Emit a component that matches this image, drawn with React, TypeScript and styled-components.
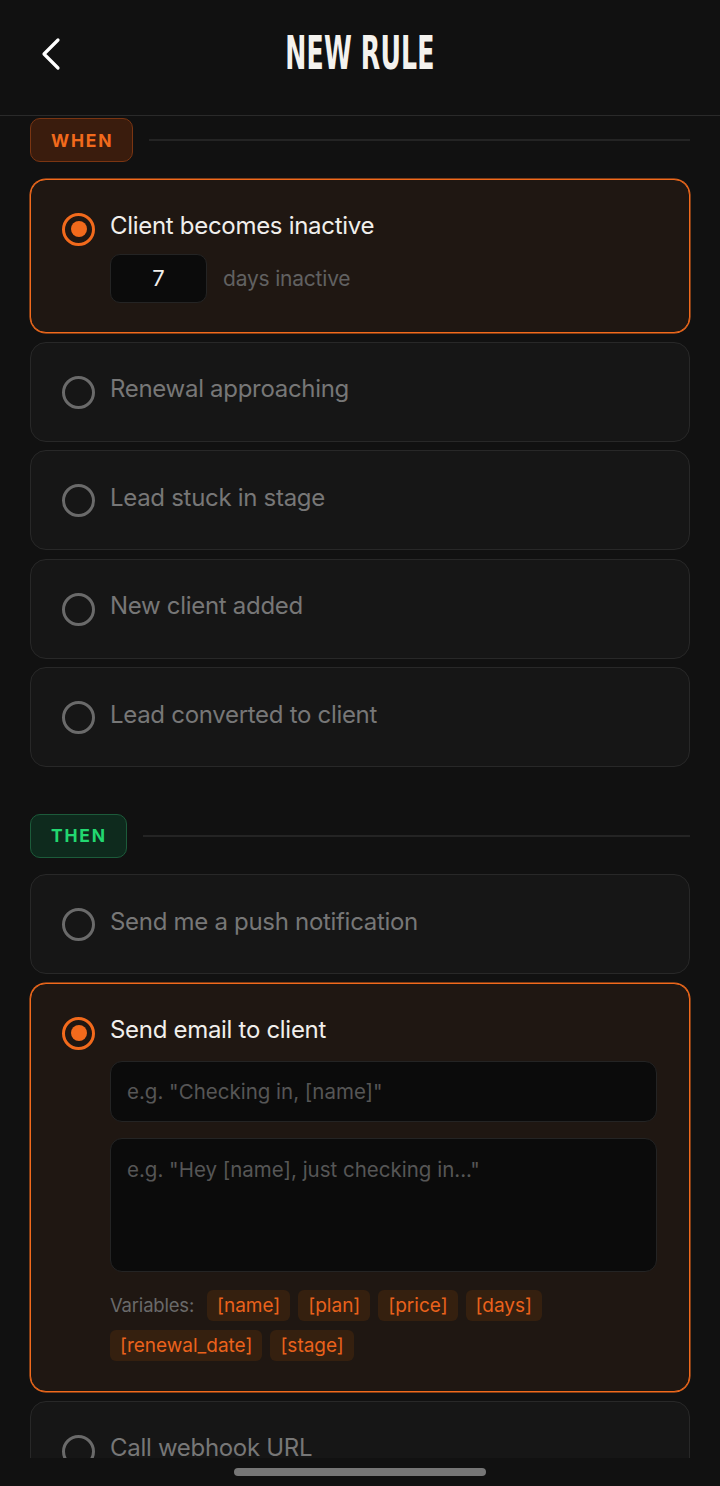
import React from "react";
import styled, { createGlobalStyle } from "styled-components";

const GlobalStyle = createGlobalStyle`
  html, body {
    margin: 0;
    padding: 0;
    background: #111111;
  }
  * {
    box-sizing: border-box;
  }
`;

const Screen = styled.div`
  width: 720px;
  height: 1486px;
  display: flex;
  flex-direction: column;
  background: #111111;
  font-family: Inter, "Noto Sans", sans-serif;
  overflow: hidden;
`;

const Header = styled.header`
  height: 116px;
  flex-shrink: 0;
  display: grid;
  grid-template-columns: 100px 1fr 100px;
  align-items: center;
  border-bottom: 1px solid #2a2a2a;
  padding-bottom: 8px;
`;

const BackButton = styled.button`
  background: none;
  border: none;
  padding: 0 0 0 38px;
  display: flex;
  align-items: center;
  cursor: pointer;
`;

const Title = styled.h1`
  margin: 0;
  text-align: center;
  font-family: "Liberation Sans Narrow", "DejaVu Sans Condensed", sans-serif;
  font-weight: 700;
  font-size: 28px;
  color: #f4f2ee;
  transform: scaleY(1.68);
  letter-spacing: 0.2px;
`;

const Scroll = styled.main`
  flex: 1;
  overflow: hidden;
  padding: 2px 30px 0;
  display: flex;
  flex-direction: column;
`;

const SectionHead = styled.div<{ $top?: number }>`
  display: flex;
  align-items: center;
  gap: 16px;
  margin-top: ${(p) => p.$top ?? 0}px;
  margin-bottom: 16.5px;
`;

const Badge = styled.span<{ $tone: "orange" | "green" }>`
  height: 44px;
  display: inline-flex;
  align-items: center;
  padding: 0 19px 0 20px;
  border-radius: 10px;
  font-family: Inter, "Noto Sans", sans-serif;
  font-weight: 700;
  font-size: 17.5px;
  letter-spacing: 1.8px;
  background: ${(p) => (p.$tone === "orange" ? "#3a1c0d" : "#0e2a1d")};
  border: 1.5px solid ${(p) => (p.$tone === "orange" ? "#7a3512" : "#1c5b3a")};
  color: ${(p) => (p.$tone === "orange" ? "#f26a1c" : "#22d770")};
`;

const Rule = styled.div`
  flex: 1;
  height: 2px;
  background: #242424;
`;

const List = styled.div`
  display: flex;
  flex-direction: column;
  gap: 8.5px;
`;

const Card = styled.div<{ $active?: boolean }>`
  border-radius: 16px;
  padding: 33px 31px ${(p) => (p.$active ? 29.5 : 32)}px;
  background: ${(p) => (p.$active ? "#1f1712" : "#161616")};
  border: 1px solid ${(p) => (p.$active ? "#f26a1c" : "#282828")};
  box-shadow: ${(p) => (p.$active ? "0 0 0 0.5px #f26a1c" : "none")};
  flex-shrink: 0;
`;

const OptionRow = styled.div`
  display: flex;
  align-items: center;
  gap: 15px;
  height: 33px;
`;

const Radio = styled.span<{ $on?: boolean }>`
  width: 33px;
  height: 33px;
  border-radius: 50%;
  border: 3px solid ${(p) => (p.$on ? "#f26a1c" : "#6a6a6a")};
  display: flex;
  align-items: center;
  justify-content: center;
  flex-shrink: 0;

  &::after {
    content: "";
    display: ${(p) => (p.$on ? "block" : "none")};
    width: 16px;
    height: 16px;
    border-radius: 50%;
    background: #f26a1c;
  }
`;

const Label = styled.span<{ $on?: boolean }>`
  font-size: 24px;
  letter-spacing: -0.3px;
  line-height: 1;
  padding-bottom: 6px;
  color: ${(p) => (p.$on ? "#f1efec" : "#777777")};
`;

const Body = styled.div<{ $top: number }>`
  padding: 0 1px 0 48px;
  margin-top: ${(p) => p.$top}px;
  display: flex;
  flex-direction: column;
`;

const DaysRow = styled.div`
  display: flex;
  align-items: center;
  gap: 16px;
`;

const NumberBox = styled.div`
  width: 97px;
  height: 49px;
  border-radius: 10px;
  background: #0b0b0b;
  border: 1.5px solid #242424;
  display: flex;
  align-items: center;
  justify-content: center;
  color: #f1efec;
  font-size: 22px;
`;

const Muted = styled.span`
  color: #616161;
  font-size: 21px;
  letter-spacing: -0.2px;
`;

const Field = styled.div<{ $h: number }>`
  height: ${(p) => p.$h}px;
  border-radius: 12px;
  background: #0b0b0b;
  border: 1.5px solid #242424;
  padding: 0 16px;
  display: flex;
  align-items: ${(p) => (p.$h > 80 ? "flex-start" : "center")};
  padding-top: ${(p) => (p.$h > 80 ? 18 : 0)}px;
  color: #565656;
  font-size: 20.5px;
  margin-bottom: 16px;
`;

const Vars = styled.div`
  display: flex;
  flex-wrap: wrap;
  align-items: center;
  gap: 9px 8px;
  margin: 2px 0 1px;
`;

const VarLabel = styled.span`
  color: #6a6a6a;
  font-size: 18.5px;
  letter-spacing: -0.2px;
  margin-right: 5px;
`;

const Chip = styled.span`
  height: 31px;
  display: inline-flex;
  align-items: center;
  padding: 0 10px;
  border-radius: 6px;
  background: #35200f;
  color: #ea621c;
  font-size: 19px;
`;

const HomeArea = styled.div`
  height: 28px;
  flex-shrink: 0;
  background: #111111;
  display: flex;
  justify-content: center;
  padding-top: 10px;
`;

const HomeBar = styled.div`
  width: 252px;
  height: 8px;
  border-radius: 4px;
  background: #767676;
`;

const Option: React.FC<{ label: string; on?: boolean; children?: React.ReactNode; top?: number }> = ({
  label,
  on,
  children,
  top = 8,
}) => (
  <Card $active={on}>
    <OptionRow>
      <Radio $on={on} />
      <Label $on={on}>{label}</Label>
    </OptionRow>
    {children && <Body $top={top}>{children}</Body>}
  </Card>
);

const variables = ["[name]", "[plan]", "[price]", "[days]", "[renewal_date]", "[stage]"];

export default function App() {
  return (
    <Screen>
      <GlobalStyle />
      <Header>
        <BackButton aria-label="Back">
          <svg width="24" height="34" viewBox="0 0 24 34" fill="none">
            <path d="M20 3 L6 17 L20 31" stroke="#ffffff" strokeWidth="3.2" strokeLinecap="round" strokeLinejoin="round" />
          </svg>
        </BackButton>
        <Title>NEW RULE</Title>
        <span />
      </Header>

      <Scroll>
        <SectionHead>
          <Badge $tone="orange">WHEN</Badge>
          <Rule />
        </SectionHead>
        <List>
          <Option label="Client becomes inactive" on>
            <DaysRow>
              <NumberBox>7</NumberBox>
              <Muted>days inactive</Muted>
            </DaysRow>
          </Option>
          <Option label="Renewal approaching" />
          <Option label="Lead stuck in stage" />
          <Option label="New client added" />
          <Option label="Lead converted to client" />
        </List>

        <SectionHead $top={46.5}>
          <Badge $tone="green">THEN</Badge>
          <Rule />
        </SectionHead>
        <List>
          <Option label="Send me a push notification" />
          <Option label="Send email to client" on top={11}>
            <Field $h={61}>e.g. "Checking in, [name]"</Field>
            <Field $h={134}>e.g. "Hey [name], just checking in..."</Field>
            <Vars>
              <VarLabel>Variables:</VarLabel>
              {variables.map((v) => (
                <Chip key={v}>{v}</Chip>
              ))}
            </Vars>
          </Option>
          <Option label="Call webhook URL" />
        </List>
      </Scroll>

      <HomeArea>
        <HomeBar />
      </HomeArea>
    </Screen>
  );
}
